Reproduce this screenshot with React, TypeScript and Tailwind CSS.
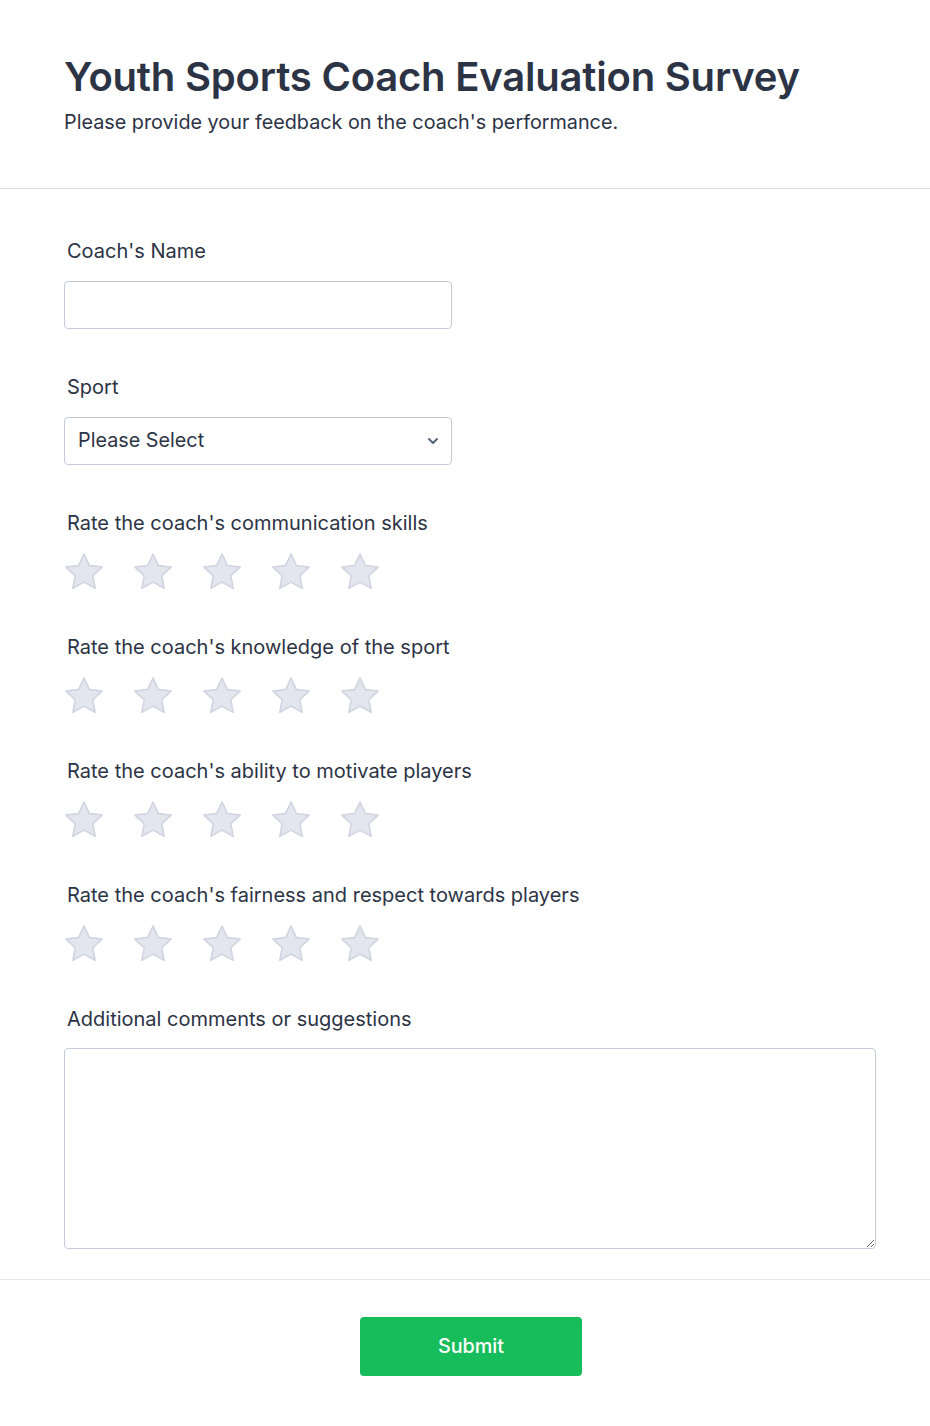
import { ChevronDown } from 'lucide-react';

const ratings = [
  "Rate the coach's communication skills",
  "Rate the coach's knowledge of the sport",
  "Rate the coach's ability to motivate players",
  "Rate the coach's fairness and respect towards players",
];

function StarIcon() {
  return (
    <svg width="40" height="40" viewBox="0 0 40 40" aria-hidden="true">
      <polygon
        points="20,2 25.4,13.6 38.1,15.1 28.8,23.8 31.2,36.4 20,30.2 8.8,36.4 11.2,23.8 1.9,15.1 14.6,13.6"
        fill="#e3e5ef"
        stroke="#cfd3e0"
        strokeWidth="1.5"
        strokeLinejoin="round"
      />
    </svg>
  );
}

function StarRating({ label }: { label: string }) {
  return (
    <div className="mb-[41px]">
      <label className="ml-[3px] block text-[20px] leading-[28px] text-[#2c3345]">{label}</label>
      <div className="mt-[15px] flex gap-[29px]">
        {[1, 2, 3, 4, 5].map((n) => (
          <button key={n} type="button" aria-label={`${n} star`} className="h-10 w-10">
            <StarIcon />
          </button>
        ))}
      </div>
    </div>
  );
}

export default function App() {
  return (
    <div className="min-h-[1426px] bg-white font-['Inter',sans-serif] text-[#2c3345]">
      <header className="border-b border-[#d8dcea] px-16 pb-[52px] pt-[53px]">
        <h1 className="text-[40px] font-semibold leading-[48px] tracking-[-0.2px]">
          Youth Sports Coach Evaluation Survey
        </h1>
        <p className="mt-[7px] text-[19.8px] leading-[28px]">
          Please provide your feedback on the coach's performance.
        </p>
      </header>

      <form className="px-16 pt-[48px]">
        <div className="mb-[44px]">
          <label className="ml-[3px] block text-[20px] leading-[28px]">Coach's Name</label>
          <input
            type="text"
            className="mt-4 block h-12 w-[388px] rounded-[4px] border border-[#c3cad8] px-3 text-[20px] outline-none"
          />
        </div>

        <div className="mb-[44px]">
          <label className="ml-[3px] block text-[20px] leading-[28px]">Sport</label>
          <div className="relative mt-4 w-[388px]">
            <select className="block h-12 w-full appearance-none rounded-[4px] border border-[#c3cad8] bg-white pl-[13px] pr-10 text-[19.8px] text-[#2c3345] outline-none">
              <option>Please Select</option>
            </select>
            <ChevronDown
              className="pointer-events-none absolute right-[11px] top-[16px] h-[16px] w-[16px] text-[#57647e]"
              strokeWidth={3}
            />
          </div>
        </div>

        {ratings.map((r) => (
          <StarRating key={r} label={r} />
        ))}

        <div>
          <label className="ml-[3px] block text-[20px] leading-[28px]">
            Additional comments or suggestions
          </label>
          <textarea className="mt-[15px] block h-[201px] w-[812px] rounded-[4px] border border-[#c3cad8] p-3 text-[20px] outline-none" />
        </div>
      </form>

      <div className="mt-[30px] flex justify-center border-t border-[#e6e8ef] pb-[50px] pl-3 pt-[37px]">
        <button
          type="button"
          className="h-[59px] w-[222px] rounded-[4px] bg-[#18bd5b] text-[19.8px] font-medium text-white"
        >
          Submit
        </button>
      </div>
    </div>
  );
}
